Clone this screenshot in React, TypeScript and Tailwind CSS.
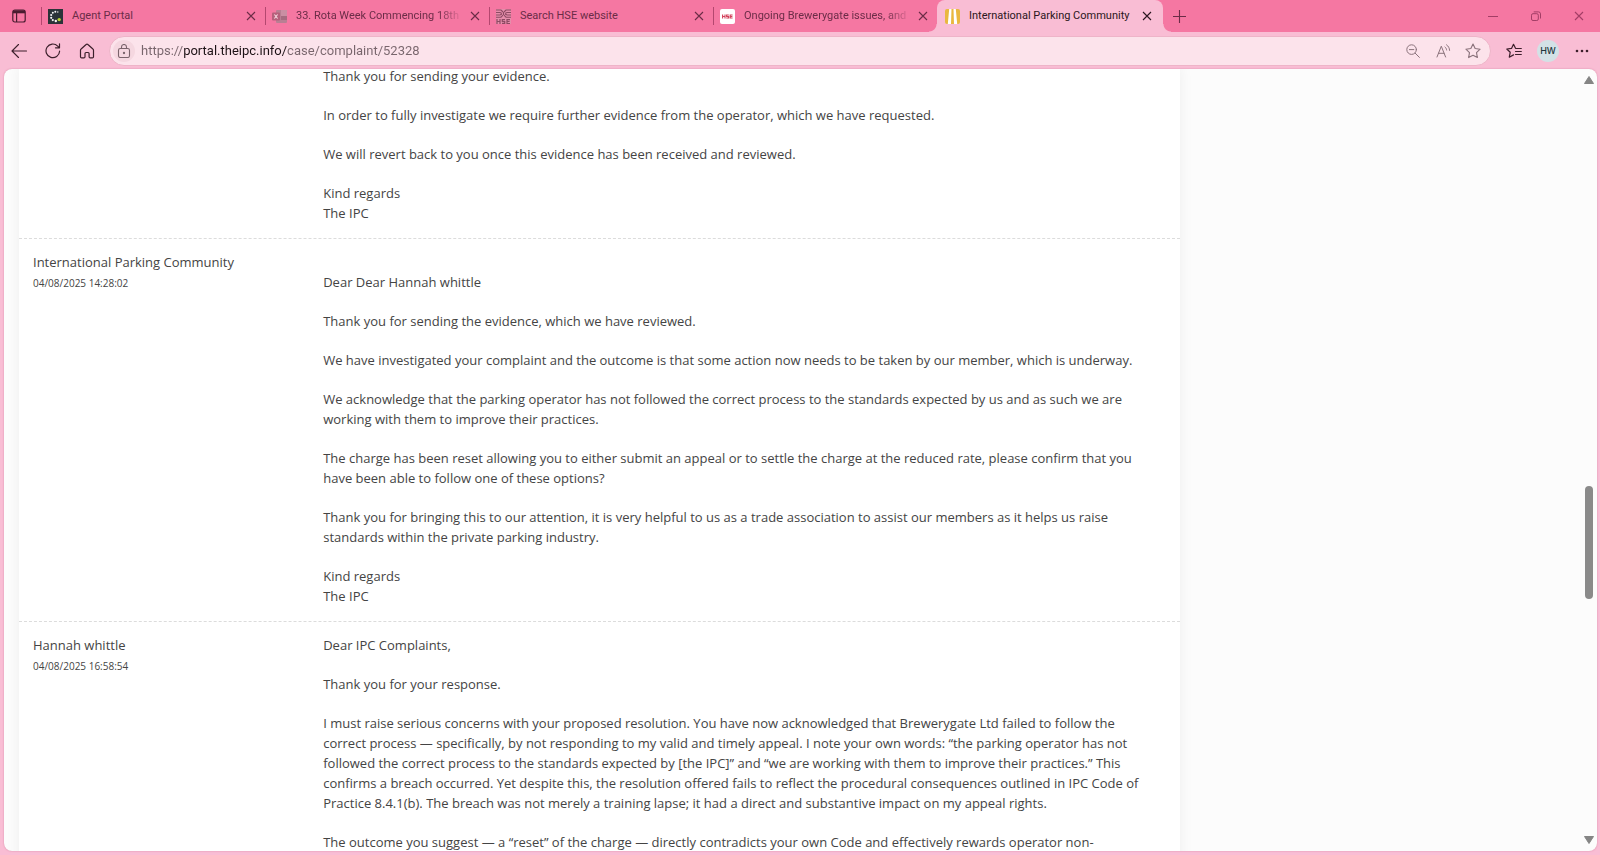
import React from "react";

interface Tab {
  title: string;
  icon: React.ReactNode;
  faded?: boolean;
  active?: boolean;
}

interface Message {
  id: number;
  sender?: string;
  date?: string;
  leadingBlank?: boolean;
  paragraphs: string[][];
}

const AgentIcon = () => (
  <svg viewBox="0 0 15 15" className="size-[15px] shrink-0">
    <rect width="15" height="15" fill="#2a3338" />
    <g fill="#f4f4f4">
      <circle cx="9.8" cy="3" r="0.7" />
      <circle cx="7.3" cy="2.8" r="1" />
      <circle cx="4.8" cy="3.8" r="1" />
      <circle cx="3.2" cy="6" r="1.1" />
      <circle cx="3.2" cy="8.8" r="1.1" />
      <circle cx="4.8" cy="11.1" r="1.1" />
      <circle cx="7.8" cy="12" r="1.2" />
    </g>
    <circle cx="11.2" cy="10.6" r="1.7" fill="#b7d334" />
  </svg>
);

const ExcelIcon = () => (
  <svg viewBox="0 0 15 15" className="size-[15px] shrink-0">
    <rect x="4" y="1" width="11" height="13" rx="1" fill="#b87f93" />
    <rect x="9" y="1" width="6" height="6" fill="#c98fa3" />
    <rect x="9" y="7" width="6" height="4" fill="#a56c80" />
    <rect x="0" y="3.5" width="8" height="8" rx="1" fill="#b5607c" />
    <path d="M2.4 5.5l3.2 4M5.6 5.5l-3.2 4" stroke="#f7dbe4" strokeWidth="1.1" />
  </svg>
);

const HseIcon = () => (
  <svg viewBox="0 0 15 15" className="size-[15px] shrink-0" fill="none" stroke="#8d4a63">
    <rect width="15" height="15" fill="#e58eab" stroke="none" />
    <path d="M0 1h5l2 2M0 3.5h4l2 1M0 6h4l2-1M0 8.2h5l2-2M15 1h-5l-2 2M15 3.5h-4l-2 1M15 6h-4l-2-1M15 8.2h-5l-2-2M7.5 3v3" strokeWidth="1.1" />
    <path d="M1 10v5M4 10v5M1 12.5h3M9 10.6H6.3v1.9h2.4v1.9H6M14 10.6h-3v3.9h3M11 12.5h2.6" strokeWidth="1.2" />
  </svg>
);

const HseRedIcon = () => (
  <svg viewBox="0 0 15 15" className="size-[15px] shrink-0" fill="none">
    <rect width="15" height="15" rx="2" fill="#fff" />
    <path d="M2.6 5.5v4M5 5.5v4M2.6 7.5H5M8.8 6H6.6v1.5h2v1.5H6.3M12.6 6h-2.4v3h2.4M10.2 7.5h2.2" stroke="#d2405a" strokeWidth="1.1" />
  </svg>
);

const IpcIcon = () => (
  <svg viewBox="0 0 15 15" className="size-[15px] shrink-0">
    <rect width="15" height="15" rx="2" fill="#e9b83f" />
    <path d="M4.2 0h2.3L6 15H2.800zM8.500 0h2.300l1.400 15H9z" fill="#fff" />
  </svg>
);

const CloseIcon = () => (
  <svg viewBox="0 0 10 10" className="size-[10px]" stroke="currentColor" strokeWidth="1.1" fill="none">
    <path d="M1 1l8 8M9 1l-8 8" />
  </svg>
);

const tabs: Tab[] = [
  { title: "Agent Portal", icon: <AgentIcon /> },
  { title: "33. Rota Week Commencing 18th", icon: <ExcelIcon />, faded: true },
  { title: "Search HSE website", icon: <HseIcon /> },
  { title: "Ongoing Brewerygate issues, and", icon: <HseRedIcon />, faded: true },
  { title: "International Parking Community", icon: <IpcIcon />, active: true },
];

const messages: Message[] = [
  {
    id: 1,
    paragraphs: [
      ["Thank you for sending your evidence."],
      ["In order to fully investigate we require further evidence from the operator, which we have requested."],
      ["We will revert back to you once this evidence has been received and reviewed."],
      ["Kind regards", "The IPC"],
    ],
  },
  {
    id: 2,
    sender: "International Parking Community",
    date: "04/08/2025 14:28:02",
    leadingBlank: true,
    paragraphs: [
      ["Dear Dear Hannah whittle"],
      ["Thank you for sending the evidence, which we have reviewed."],
      ["We have investigated your complaint and the outcome is that some action now needs to be taken by our member, which is underway."],
      ["We acknowledge that the parking operator has not followed the correct process to the standards expected by us and as such we are working with them to improve their practices."],
      ["The charge has been reset allowing you to either submit an appeal or to settle the charge at the reduced rate, please confirm that you have been able to follow one of these options?"],
      ["Thank you for bringing this to our attention, it is very helpful to us as a trade association to assist our members as it helps us raise standards within the private parking industry."],
      ["Kind regards", "The IPC"],
    ],
  },
  {
    id: 3,
    sender: "Hannah whittle",
    date: "04/08/2025 16:58:54",
    paragraphs: [
      ["Dear IPC Complaints,"],
      ["Thank you for your response."],
      ["I must raise serious concerns with your proposed resolution. You have now acknowledged that Brewerygate Ltd failed to follow the correct process — specifically, by not responding to my valid and timely appeal. I note your own words: “the parking operator has not followed the correct process to the standards expected by [the IPC]” and “we are working with them to improve their practices.” This confirms a breach occurred. Yet despite this, the resolution offered fails to reflect the procedural consequences outlined in IPC Code of Practice 8.4.1(b). The breach was not merely a training lapse; it had a direct and substantive impact on my appeal rights."],
      ["The outcome you suggest — a “reset” of the charge — directly contradicts your own Code and effectively rewards operator non-"],
    ],
  },
];

const TabItem: React.FC<{ tab: Tab }> = ({ tab }) => (
  <div
    className={
      tab.active
        ? "relative flex h-8 w-[226px] min-w-0 items-center rounded-t-lg bg-[#f9bdd4] pl-2 pr-1 text-[#2b1620]"
        : "flex h-8 w-56 min-w-0 items-center pr-0.5 text-[#6b2c47]"
    }
  >
    {!tab.active && <span className="mr-1.5 h-[18px] w-px shrink-0 bg-[#b4476f]" />}
    {tab.icon}
    <a
      href="#"
      className={
        tab.faded
          ? "ml-[9px] min-w-0 flex-1 overflow-hidden whitespace-nowrap text-[11px] [mask-image:linear-gradient(to_right,black_85%,transparent)]"
          : "ml-[9px] min-w-0 flex-1 overflow-hidden whitespace-nowrap text-[11px]"
      }
    >
      {tab.title}
    </a>
    <button type="button" aria-label="Close tab" className="flex size-6 shrink-0 items-center justify-center">
      <CloseIcon />
    </button>
    {tab.active && (
      <>
        <span className="absolute bottom-0 -left-2 size-2 bg-[radial-gradient(circle_at_0_0,#f577a2_7px,#f9bdd4_8px)]" />
        <span className="absolute bottom-0 -right-2 size-2 bg-[radial-gradient(circle_at_100%_0,#f577a2_7px,#f9bdd4_8px)]" />
      </>
    )}
  </div>
);

const ToolButton: React.FC<{ label: string; className?: string; children: React.ReactNode }> = ({ label, className, children }) => (
  <button type="button" aria-label={label} className={className ?? "flex h-8 w-[34px] shrink-0 items-center justify-center"}>
    {children}
  </button>
);

const MessageRow: React.FC<{ message: Message; first: boolean }> = ({ message, first }) => (
  <article
    className={
      first
        ? "-mt-[3px] grid grid-cols-4 pb-[15px]"
        : "grid grid-cols-4 border-t border-dashed border-[#dcdcdc] pt-[13px] pb-[15px]"
    }
  >
    <div className="px-[14px]">
      <h2 className="text-[13px] leading-5">{message.sender}</h2>
      {message.date && <time className="block pt-px text-[10px] leading-5">{message.date}</time>}
    </div>
    <div className="col-span-3 flex flex-col gap-[19px] pl-[14px] pr-6 text-[13px] leading-5">
      {message.paragraphs.map((lines, i) => (
        <p key={i} className={i === 0 && message.leadingBlank ? "pt-5" : ""}>
          {lines.map((line, j) => (
            <React.Fragment key={j}>
              {j > 0 && <br />}
              {line}
            </React.Fragment>
          ))}
        </p>
      ))}
    </div>
  </article>
);

const App: React.FC = () => {
  return (
    <div className="flex h-screen flex-col overflow-hidden bg-[#f9bdd4] font-['Open_Sans',sans-serif]">
      <header className="shrink-0">
        <div className="flex h-8 items-center bg-[#f577a2] font-[Roboto,sans-serif]">
          <button type="button" aria-label="Tab actions" className="flex h-8 w-[41px] shrink-0 items-center pl-3 text-[#4a1c30]">
            <svg viewBox="0 0 14 14" className="size-[14px]" fill="none" stroke="currentColor" strokeWidth="1.2">
              <rect x="0.8" y="1" width="12.4" height="12" rx="2" />
              <path d="M1 2.8h12" strokeWidth="3" />
              <path d="M4.6 4v9" />
            </svg>
          </button>
          <nav className="flex min-w-0">
            {tabs.map((tab) => (
              <TabItem key={tab.title} tab={tab} />
            ))}
          </nav>
          <button type="button" aria-label="New tab" className="ml-2 flex h-8 w-4 items-center justify-center text-[#6b2c47]">
            <svg viewBox="0 0 13 13" className="size-[13px] shrink-0" stroke="currentColor" strokeWidth="1.1">
              <path d="M6.5 0v13M0 6.5h13" />
            </svg>
          </button>
          <div className="ml-auto flex text-[#a33e66]">
            <button type="button" aria-label="Minimize" className="flex h-8 w-[43px] items-center justify-center">
              <svg viewBox="0 0 10 10" className="size-[10px]" stroke="currentColor">
                <path d="M0 5.5h10" />
              </svg>
            </button>
            <button type="button" aria-label="Restore" className="flex h-8 w-[43px] items-center justify-center">
              <svg viewBox="0 0 10 10" className="size-[10px]" fill="none" stroke="currentColor">
                <rect x="0.5" y="2.7" width="6.8" height="6.8" rx="1.5" />
                <path d="M2.7 0.9h4.8a2 2 0 0 1 2 2v4.6" />
              </svg>
            </button>
            <button type="button" aria-label="Close window" className="flex h-8 w-[43px] items-center justify-center">
              <CloseIcon />
            </button>
          </div>
        </div>

        <div className="flex h-[37px] items-center pl-0.5 pr-px text-[#3c1f2b]">
          <ToolButton label="Back">
            <svg viewBox="0 0 16 16" className="size-4" fill="none" stroke="currentColor" strokeWidth="1.1" strokeLinecap="round" strokeLinejoin="round">
              <path d="M15.5 8H1M7.5 1.5L1 8l6.5 6.5" />
            </svg>
          </ToolButton>
          <ToolButton label="Refresh">
            <svg viewBox="0 0 16 16" className="size-4" fill="none" stroke="currentColor" strokeWidth="1.2" strokeLinecap="round" strokeLinejoin="round">
              <path d="M14.6 8.2A6.8 6.8 0 1 1 12.7 3.1l1.6 1.6M14.5 0.8v4h-4" />
            </svg>
          </ToolButton>
          <ToolButton label="Home">
            <svg viewBox="0 0 16 16" className="size-4" fill="none" stroke="currentColor" strokeWidth="1.2" strokeLinejoin="round">
              <path d="M1.5 7.2c0-.5.2-.9.6-1.2l5-4.5c.5-.5 1.3-.5 1.8 0l5 4.5c.4.3.6.7.6 1.2v6.5c0 .6-.5 1.1-1.1 1.1h-2.2c-.6 0-1.1-.5-1.1-1.1V10.500c0-.6-.4-1-1-1H7c-.6 0-1 .4-1 1v3.200c0 .6-.5 1.100-1.100 1.100H2.600c-.6 0-1.100-.5-1.100-1.100z" />
            </svg>
          </ToolButton>
          <div className="ml-[5px] flex h-[30px] min-w-0 flex-1 items-center rounded-full border border-[#eeb4c8] bg-[#fce3eb] pl-[3px]">
            <button type="button" aria-label="View site information" className="flex size-[22px] shrink-0 items-center justify-center rounded-full bg-[#f5d7e0] text-[#7a636b]">
              <svg viewBox="0 0 14 14" className="size-[14px]" fill="none" stroke="currentColor" strokeWidth="1.1">
                <rect x="1.5" y="4.5" width="11" height="9" rx="1.8" />
                <path d="M4.5 4.5V3a2.5 2.5 0 0 1 5 0v1.5" />
                <circle cx="7" cy="9" r="0.6" fill="currentColor" />
              </svg>
            </button>
            <input
              type="text"
              aria-label="Address bar"
              defaultValue="https://portal.theipc.info/case/complaint/52328"
              className="ml-1.5 min-w-0 flex-1 bg-[linear-gradient(to_right,#78656c_43px,#1d1216_43px,#1d1216_146px,#78656c_146px)] bg-clip-text font-[Roboto,sans-serif] text-[13px] text-transparent outline-none"
            />
            <ToolButton label="Zoom out" className="flex h-7 w-[30px] shrink-0 items-center justify-center text-[#8a727b]">
              <svg viewBox="0 0 14 14" className="size-[14px]" fill="none" stroke="currentColor" strokeLinecap="round">
                <circle cx="5.6" cy="5.6" r="4.8" />
                <path d="M9.2 9.2l4.2 4.2M3.4 5.6h4.4" />
              </svg>
            </ToolButton>
            <ToolButton label="Read aloud" className="flex h-7 w-[30px] shrink-0 items-center justify-center text-[#8a727b]">
              <svg viewBox="0 0 15 14" className="h-[14px] w-[15px]" fill="none" stroke="currentColor" strokeLinecap="round" strokeLinejoin="round">
                <path d="M1 13L5.3 2.2L9.6 13M2.5 9.3h5.6M9 3c1 .8 1.500 1.800 1.600 3M10.500 .8c2 1.400 3 3.200 3.100 5.600" />
              </svg>
            </ToolButton>
            <ToolButton label="Add to favourites" className="mr-0.5 flex h-7 w-[30px] shrink-0 items-center justify-center text-[#8a727b]">
              <svg viewBox="0 0 16 16" className="size-4" fill="none" stroke="currentColor" strokeWidth="1.1" strokeLinejoin="round">
                <path d="M8 1l2.150 4.500 4.950.7-3.600 3.450.9 4.900L8 12.200l-4.400 2.350.9-4.900L.9 6.200l4.950-.7z" />
              </svg>
            </ToolButton>
          </div>
          <ToolButton label="Favourites" className="ml-1.5 flex h-8 w-[34px] shrink-0 items-center justify-center">
            <svg viewBox="0 0 16 16" className="size-4" fill="none" stroke="currentColor" strokeWidth="1.2" strokeLinejoin="round" strokeLinecap="round">
              <path d="M9.500 5.300L7.500 1.300l-2 4.100-4.700.6 3.400 3.300-.9 4.900 4.200-2.300M10 5.500h5.300M9.500 8.500h5.800M9.500 11.500h5.800" />
            </svg>
          </ToolButton>
          <ToolButton label="Profile">
            <span className="flex size-[22px] items-center justify-center rounded-full bg-[#d3e1e6] font-[Inter,sans-serif] text-[9px] font-medium text-[#23363d]">HW</span>
          </ToolButton>
          <ToolButton label="Settings and more">
            <svg viewBox="0 0 14 4" className="h-1 w-[14px]" fill="currentColor">
              <circle cx="2" cy="2" r="1.3" />
              <circle cx="7" cy="2" r="1.3" />
              <circle cx="12" cy="2" r="1.3" />
            </svg>
          </ToolButton>
        </div>
      </header>

      <div className="mb-1 ml-1 mr-[3px] flex min-h-0 flex-1 overflow-hidden rounded-lg bg-[#fcfcfc] shadow-[0_0_2px_#d98ba6]">
        <main className="min-w-0 flex-1 overflow-hidden text-[#444444]">
          <div className="h-full w-3/4 pl-[15px] pr-[7px]">
            <section className="min-h-full bg-white shadow-[0_0_14px_rgba(0,0,0,0.06)]">
              {messages.map((message, i) => (
                <MessageRow key={message.id} message={message} first={i === 0} />
              ))}
            </section>
          </div>
        </main>
        <div aria-hidden="true" className="flex w-4 shrink-0 flex-col items-center py-[7px]">
          <svg viewBox="0 0 10 8" className="h-2 w-[10px]" fill="#858585">
            <path d="M5 .5L9.500 7.500H.5z" stroke="#858585" strokeLinejoin="round" />
          </svg>
          <div className="flex-[402]" />
          <div className="w-2 flex-[113] rounded-full bg-[#8a8a8a]" />
          <div className="flex-[237]" />
          <svg viewBox="0 0 10 8" className="h-2 w-[10px]" fill="#858585">
            <path d="M5 7.500L9.500 .5H.5z" stroke="#858585" strokeLinejoin="round" />
          </svg>
        </div>
      </div>
    </div>
  );
};

export default App;
